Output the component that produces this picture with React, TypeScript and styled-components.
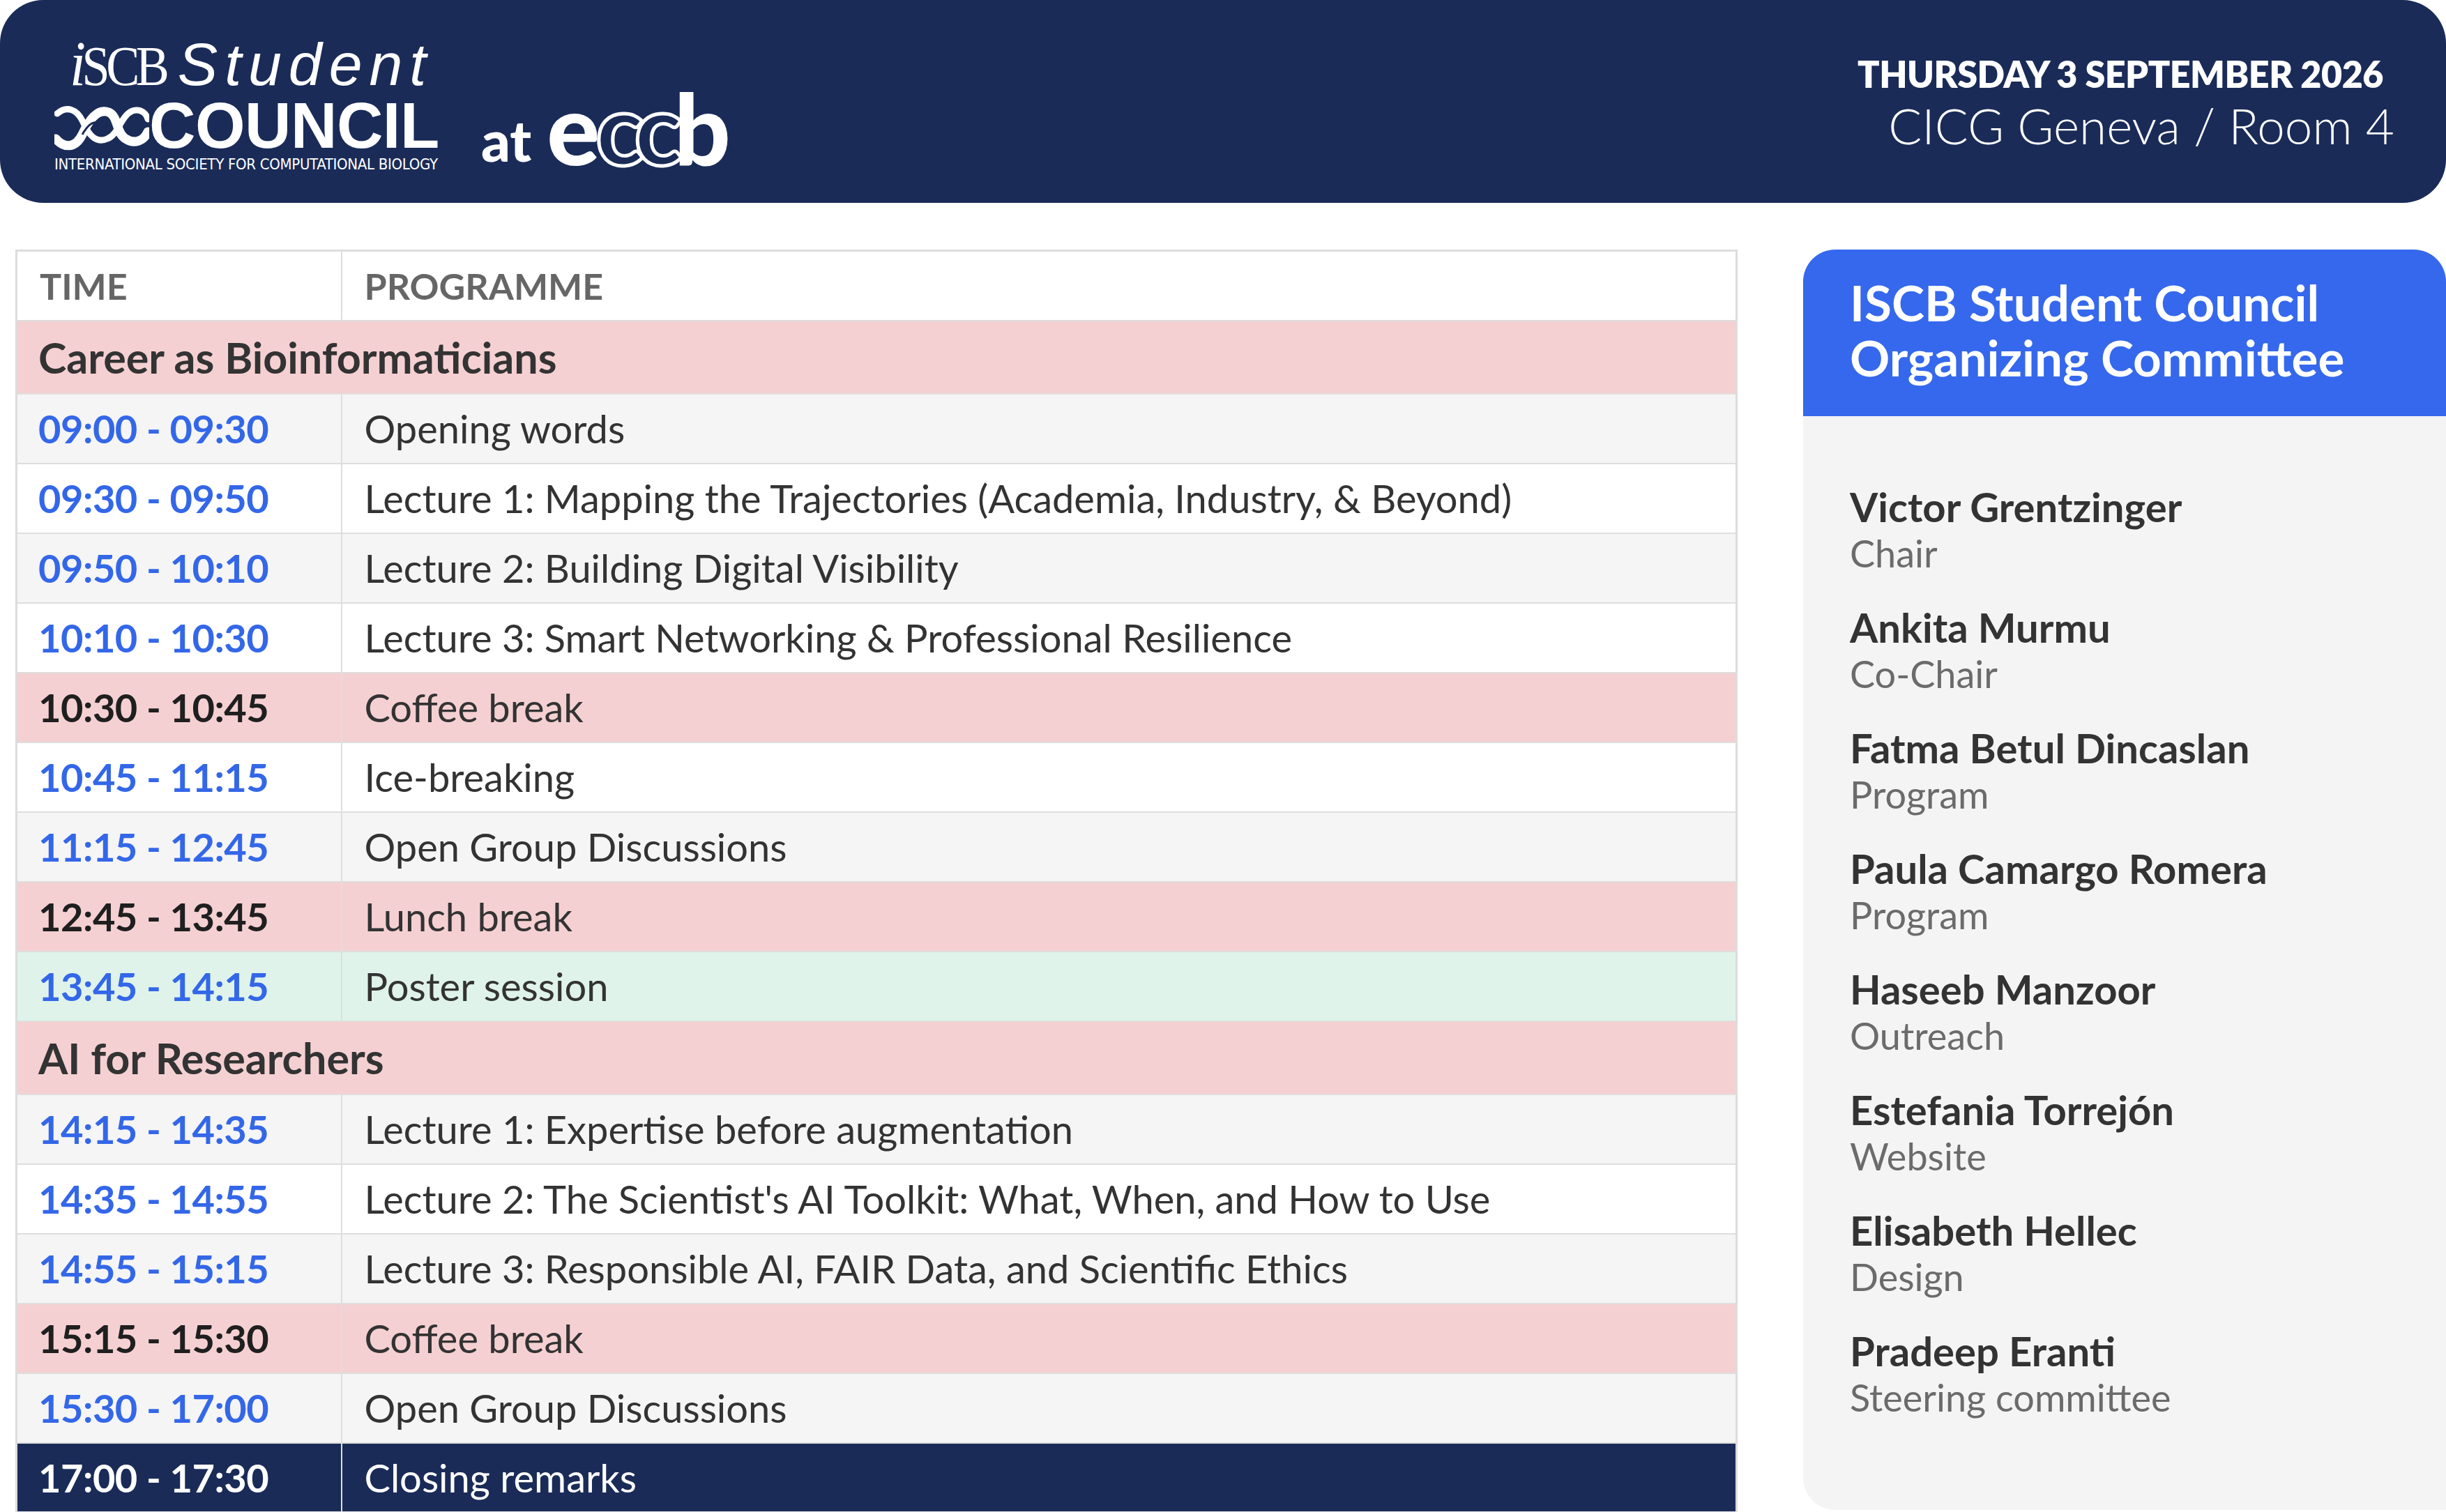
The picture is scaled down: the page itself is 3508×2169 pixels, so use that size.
import styled, { createGlobalStyle } from 'styled-components';

const GlobalStyle = createGlobalStyle`
  html, body {
    margin: 0;
    padding: 0;
    background: #ffffff;
  }
  body {
    font-family: Lato, 'Open Sans', sans-serif;
    color: #333333;
  }
`;

type Tone = 'white' | 'gray' | 'break' | 'poster' | 'closing';

type Row =
  | { kind: 'section'; title: string }
  | { kind: 'slot'; time: string; title: string; tone: Tone };

const programme: Row[] = [
  { kind: 'section', title: 'Career as Bioinformaticians' },
  { kind: 'slot', time: '09:00 - 09:30', title: 'Opening words', tone: 'gray' },
  { kind: 'slot', time: '09:30 - 09:50', title: 'Lecture 1: Mapping the Trajectories (Academia, Industry, & Beyond)', tone: 'white' },
  { kind: 'slot', time: '09:50 - 10:10', title: 'Lecture 2: Building Digital Visibility', tone: 'gray' },
  { kind: 'slot', time: '10:10 - 10:30', title: 'Lecture 3: Smart Networking & Professional Resilience', tone: 'white' },
  { kind: 'slot', time: '10:30 - 10:45', title: 'Coffee break', tone: 'break' },
  { kind: 'slot', time: '10:45 - 11:15', title: 'Ice-breaking', tone: 'white' },
  { kind: 'slot', time: '11:15 - 12:45', title: 'Open Group Discussions', tone: 'gray' },
  { kind: 'slot', time: '12:45 - 13:45', title: 'Lunch break', tone: 'break' },
  { kind: 'slot', time: '13:45 - 14:15', title: 'Poster session', tone: 'poster' },
  { kind: 'section', title: 'AI for Researchers' },
  { kind: 'slot', time: '14:15 - 14:35', title: 'Lecture 1: Expertise before augmentation', tone: 'gray' },
  { kind: 'slot', time: '14:35 - 14:55', title: "Lecture 2: The Scientist's AI Toolkit: What, When, and How to Use", tone: 'white' },
  { kind: 'slot', time: '14:55 - 15:15', title: 'Lecture 3: Responsible AI, FAIR Data, and Scientific Ethics', tone: 'gray' },
  { kind: 'slot', time: '15:15 - 15:30', title: 'Coffee break', tone: 'break' },
  { kind: 'slot', time: '15:30 - 17:00', title: 'Open Group Discussions', tone: 'gray' },
  { kind: 'slot', time: '17:00 - 17:30', title: 'Closing remarks', tone: 'closing' },
];

const committee = [
  { name: 'Victor Grentzinger', role: 'Chair' },
  { name: 'Ankita Murmu', role: 'Co-Chair' },
  { name: 'Fatma Betul Dincaslan', role: 'Program' },
  { name: 'Paula Camargo Romera', role: 'Program' },
  { name: 'Haseeb Manzoor', role: 'Outreach' },
  { name: 'Estefania Torrejón', role: 'Website' },
  { name: 'Elisabeth Hellec', role: 'Design' },
  { name: 'Pradeep Eranti', role: 'Steering committee' },
];

const rowBg: Record<Tone, string> = {
  white: '#ffffff',
  gray: '#f5f5f5',
  break: '#f5d0d2',
  poster: '#dff3ea',
  closing: '#1a2b58',
};

const timeColor: Record<Tone, string> = {
  white: '#3467e8',
  gray: '#3467e8',
  break: '#1f1f1f',
  poster: '#3467e8',
  closing: '#ffffff',
};

const Page = styled.div`
  width: 3508px;
  height: 2169px;
  display: flex;
  flex-direction: column;
  overflow: hidden;
`;

const Banner = styled.header`
  height: 291px;
  flex-shrink: 0;
  background: #1a2b58;
  border-radius: 62px;
  display: flex;
  align-items: center;
  justify-content: space-between;
  padding: 0 74px 0 78px;
  box-sizing: border-box;
  color: #ffffff;
`;

const Brand = styled.div`
  display: flex;
  align-items: flex-end;
  padding-top: 10px;
`;

const Logo = styled.div`
  display: flex;
  flex-direction: column;
  width: 562px;
  margin-right: 50px;
`;

const LogoTop = styled.div`
  display: flex;
  align-items: baseline;
  padding-left: 22px;
  line-height: 76px;
  height: 90px;
`;

const Iscb = styled.span`
  font-family: 'Liberation Serif', serif;
  font-size: 80px;
  letter-spacing: -6px;
  transform: scaleX(0.9);
  transform-origin: left;
  margin-right: 2px;
  & > i {
    font-size: 92px;
  }
`;

const StudentWord = styled.span`
  font-family: 'Liberation Sans', sans-serif;
  font-style: italic;
  font-size: 86px;
  letter-spacing: 10px;
  font-weight: 400;
`;

const LogoMid = styled.div`
  display: flex;
  align-items: center;
  height: 74px;
`;

const Council = styled.span`
  font-family: 'Liberation Sans', sans-serif;
  font-weight: 700;
  font-size: 92px;
  line-height: 72px;
  letter-spacing: -0.5px;
`;

const Society = styled.span`
  font-family: 'Liberation Sans Narrow', 'DejaVu Sans Condensed', sans-serif;
  font-size: 22px;
  line-height: 26px;
  letter-spacing: -0.3px;
  white-space: nowrap;
  margin-top: 6px;
`;

const At = styled.span`
  font-family: Lato, sans-serif;
  font-weight: 900;
  font-size: 82px;
  line-height: 70px;
  margin-bottom: 14px;
  margin-right: 22px;
`;

const Eccb = styled.span`
  font-family: Lato, sans-serif;
  font-weight: 900;
  font-size: 142px;
  line-height: 110px;
  letter-spacing: -6px;
  margin-bottom: 12px;
  & > em {
    font-style: normal;
    color: transparent;
    -webkit-text-stroke: 5px #ffffff;
    letter-spacing: -12px;
  }
`;

const Venue = styled.div`
  display: flex;
  flex-direction: column;
  align-items: flex-end;
  padding-top: 4px;
`;

const DateLine = styled.div`
  font-family: Lato, sans-serif;
  font-weight: 800;
  font-size: 52px;
  line-height: 64px;
  letter-spacing: -0.5px;
  margin-right: 16px;
`;

const Place = styled.div`
  font-family: Lato, sans-serif;
  font-weight: 300;
  font-size: 71px;
  line-height: 84px;
`;

const Body = styled.main`
  flex: 1;
  display: grid;
  grid-template-columns: 2470px 1fr;
  column-gap: 94px;
  padding: 67px 0 0 22px;
  min-height: 0;
`;

const Table = styled.table`
  width: 100%;
  border-collapse: collapse;
  table-layout: fixed;
  border: 3px solid #dddddd;
  align-self: start;
`;

const HeadCell = styled.th`
  height: 100px;
  padding: 0 32px;
  text-align: left;
  font-size: 52px;
  font-weight: 700;
  color: #666666;
  background: #ffffff;
  border: 2px solid #dddddd;
  box-sizing: border-box;
`;

const SectionCell = styled.td`
  height: 105px;
  padding: 0 30px;
  font-size: 61px;
  font-weight: 700;
  color: #333333;
  background: #f5d0d2;
  border: 2px solid #e2dede;
  box-sizing: border-box;
`;

const TimeCell = styled.td<{ $tone: Tone }>`
  height: 100px;
  padding: 0 30px;
  font-size: 56px;
  font-weight: 700;
  letter-spacing: -0.5px;
  color: ${(p) => timeColor[p.$tone]};
  background: ${(p) => rowBg[p.$tone]};
  border: 2px solid #dedede;
  box-sizing: border-box;
  white-space: nowrap;
`;

const TitleCell = styled.td<{ $tone: Tone }>`
  height: 100px;
  padding: 0 32px;
  font-size: 56px;
  font-weight: 400;
  color: ${(p) => (p.$tone === 'closing' ? '#ffffff' : '#333333')};
  background: ${(p) => rowBg[p.$tone]};
  border: 2px solid #dedede;
  box-sizing: border-box;
  white-space: nowrap;
`;

const Panel = styled.aside`
  background: #f4f4f4;
  border-radius: 46px 46px 0 46px;
  display: flex;
  flex-direction: column;
  overflow: hidden;
  height: 1808px;
`;

const PanelHead = styled.div`
  background: #3568ec;
  height: 239px;
  box-sizing: border-box;
  padding: 36px 30px 0 67px;
  color: #ffffff;
  font-size: 71px;
  font-weight: 700;
  line-height: 79px;
  white-space: nowrap;
`;

const MemberList = styled.ul`
  list-style: none;
  margin: 0;
  padding: 96px 30px 0 67px;
  display: flex;
  flex-direction: column;
  gap: 39px;
`;

const Member = styled.li`
  display: flex;
  flex-direction: column;
`;

const MemberName = styled.span`
  font-size: 58px;
  font-weight: 700;
  line-height: 67px;
  color: #333333;
  white-space: nowrap;
`;

const MemberRole = styled.span`
  font-size: 54px;
  font-weight: 400;
  line-height: 67px;
  color: #6b6b6b;
`;

const Helix = () => (
  <svg width="136" height="74" viewBox="0 0 136 74" fill="none">
    <path
      d="M2 56 C14 70 30 70 40 50 C50 28 62 12 78 18 C92 24 88 48 102 56 C114 64 128 60 134 46"
      stroke="#ffffff"
      strokeWidth="13"
      strokeLinecap="round"
    />
    <path
      d="M4 20 C18 8 32 14 40 30 C48 48 58 64 76 56 C92 50 96 22 112 16 C124 12 132 20 134 28"
      stroke="#ffffff"
      strokeWidth="9"
      strokeLinecap="round"
    />
    <path d="M40 50 C48 36 56 30 64 34" stroke="#1a2b58" strokeWidth="3" />
  </svg>
);

export default function App() {
  return (
    <>
      <GlobalStyle />
      <Page>
        <Banner>
          <Brand>
            <Logo>
              <LogoTop>
                <Iscb>
                  <i>i</i>SCB
                </Iscb>
                <StudentWord>Student</StudentWord>
              </LogoTop>
              <LogoMid>
                <Helix />
                <Council>COUNCIL</Council>
              </LogoMid>
              <Society>INTERNATIONAL SOCIETY FOR COMPUTATIONAL BIOLOGY</Society>
            </Logo>
            <At>at</At>
            <Eccb>
              e<em>cc</em>b
            </Eccb>
          </Brand>
          <Venue>
            <DateLine>THURSDAY 3 SEPTEMBER 2026</DateLine>
            <Place>CICG Geneva / Room 4</Place>
          </Venue>
        </Banner>

        <Body>
          <Table>
            <colgroup>
              <col style={{ width: 466 }} />
              <col />
            </colgroup>
            <thead>
              <tr>
                <HeadCell>TIME</HeadCell>
                <HeadCell>PROGRAMME</HeadCell>
              </tr>
            </thead>
            <tbody>
              {programme.map((row, i) =>
                row.kind === 'section' ? (
                  <tr key={i}>
                    <SectionCell colSpan={2}>{row.title}</SectionCell>
                  </tr>
                ) : (
                  <tr key={i}>
                    <TimeCell $tone={row.tone}>{row.time}</TimeCell>
                    <TitleCell $tone={row.tone}>{row.title}</TitleCell>
                  </tr>
                )
              )}
            </tbody>
          </Table>

          <Panel>
            <PanelHead>
              ISCB Student Council
              <br />
              Organizing Committee
            </PanelHead>
            <MemberList>
              {committee.map((m) => (
                <Member key={m.name}>
                  <MemberName>{m.name}</MemberName>
                  <MemberRole>{m.role}</MemberRole>
                </Member>
              ))}
            </MemberList>
          </Panel>
        </Body>
      </Page>
    </>
  );
}
